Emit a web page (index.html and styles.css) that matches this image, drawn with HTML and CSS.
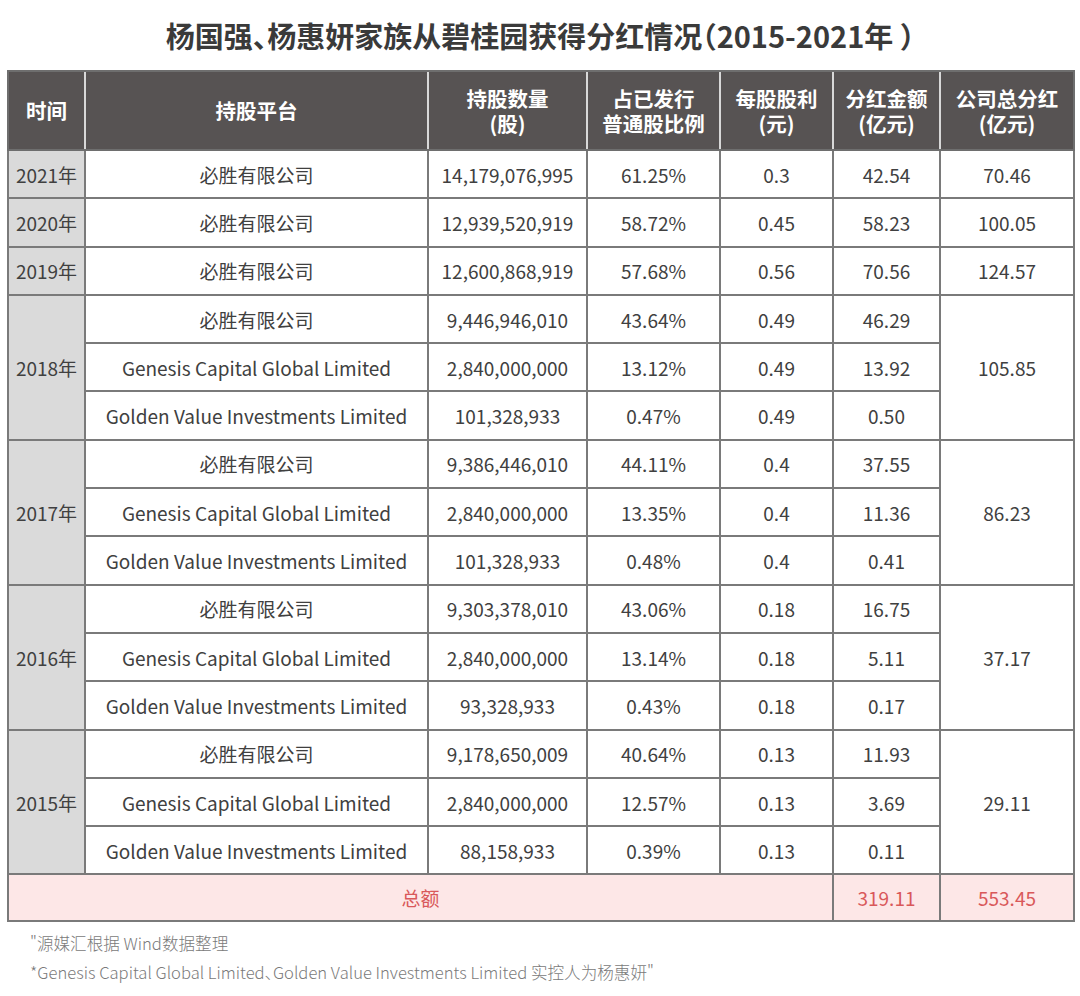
FILE: index.html
```html
<!DOCTYPE html>
<html lang="zh-CN">
<head>
<meta charset="utf-8">
<title>杨国强、杨惠妍家族从碧桂园获得分红情况</title>
<link rel="stylesheet" href="styles.css">
</head>
<body>
<h1 class="title">杨国强、杨惠妍家族从碧桂园获得分红情况（2015-2021年 ）</h1>
<table class="tbl">
  <colgroup>
    <col class="c1"><col class="c2"><col class="c3"><col class="c4"><col class="c5"><col class="c6"><col class="c7">
  </colgroup>
  <thead>
    <tr>
      <th>时间</th>
      <th>持股平台</th>
      <th><span class="hl">持股数量</span><span class="hl">(股)</span></th>
      <th><span class="hl">占已发行</span><span class="hl">普通股比例</span></th>
      <th><span class="hl">每股股利</span><span class="hl">(元)</span></th>
      <th><span class="hl">分红金额</span><span class="hl">(亿元)</span></th>
      <th><span class="hl">公司总分红</span><span class="hl">(亿元)</span></th>
    </tr>
  </thead>
  <tbody>
    <tr class="r"><td class="yr">2021年</td><td>必胜有限公司</td><td>14,179,076,995</td><td>61.25%</td><td>0.3</td><td>42.54</td><td>70.46</td></tr>
    <tr class="r"><td class="yr">2020年</td><td>必胜有限公司</td><td>12,939,520,919</td><td>58.72%</td><td>0.45</td><td>58.23</td><td>100.05</td></tr>
    <tr class="r"><td class="yr">2019年</td><td>必胜有限公司</td><td>12,600,868,919</td><td>57.68%</td><td>0.56</td><td>70.56</td><td>124.57</td></tr>

    <tr class="r"><td class="yr" rowspan="3">2018年</td><td>必胜有限公司</td><td>9,446,946,010</td><td>43.64%</td><td>0.49</td><td>46.29</td><td rowspan="3">105.85</td></tr>
    <tr class="r"><td>Genesis Capital Global Limited</td><td>2,840,000,000</td><td>13.12%</td><td>0.49</td><td>13.92</td></tr>
    <tr class="r"><td>Golden Value Investments Limited</td><td>101,328,933</td><td>0.47%</td><td>0.49</td><td>0.50</td></tr>

    <tr class="r"><td class="yr" rowspan="3">2017年</td><td>必胜有限公司</td><td>9,386,446,010</td><td>44.11%</td><td>0.4</td><td>37.55</td><td rowspan="3">86.23</td></tr>
    <tr class="r"><td>Genesis Capital Global Limited</td><td>2,840,000,000</td><td>13.35%</td><td>0.4</td><td>11.36</td></tr>
    <tr class="r"><td>Golden Value Investments Limited</td><td>101,328,933</td><td>0.48%</td><td>0.4</td><td>0.41</td></tr>

    <tr class="r"><td class="yr" rowspan="3">2016年</td><td>必胜有限公司</td><td>9,303,378,010</td><td>43.06%</td><td>0.18</td><td>16.75</td><td rowspan="3">37.17</td></tr>
    <tr class="r"><td>Genesis Capital Global Limited</td><td>2,840,000,000</td><td>13.14%</td><td>0.18</td><td>5.11</td></tr>
    <tr class="r"><td>Golden Value Investments Limited</td><td>93,328,933</td><td>0.43%</td><td>0.18</td><td>0.17</td></tr>

    <tr class="r"><td class="yr" rowspan="3">2015年</td><td>必胜有限公司</td><td>9,178,650,009</td><td>40.64%</td><td>0.13</td><td>11.93</td><td rowspan="3">29.11</td></tr>
    <tr class="r"><td>Genesis Capital Global Limited</td><td>2,840,000,000</td><td>12.57%</td><td>0.13</td><td>3.69</td></tr>
    <tr class="r"><td>Golden Value Investments Limited</td><td>88,158,933</td><td>0.39%</td><td>0.13</td><td>0.11</td></tr>

    <tr class="total"><td colspan="5">总额</td><td>319.11</td><td>553.45</td></tr>
  </tbody>
</table>
<div class="notes">
  <p>"源媒汇根据 Wind数据整理</p>
  <p>*Genesis Capital Global Limited、Golden Value Investments Limited 实控人为杨惠妍"</p>
</div>
</body>
</html>
```
FILE: styles.css
```css
html, body {
  margin: 0;
  padding: 0;
  background: #ffffff;
}
body {
  font-family: "Noto Sans CJK SC", "Noto Sans", sans-serif;
  color: #404040;
  width: 1080px;
}
.title {
  margin: 0;
  padding-top: 6px;
  height: 64px;
  line-height: 58px;
  font-size: 29px;
  font-weight: 700;
  color: #3a3a3a;
  text-align: center;
  font-feature-settings: "halt";
}
.tbl {
  margin-left: 7px;
  width: 1066px;
  border-collapse: collapse;
  table-layout: fixed;
  font-size: 19px;
}
.c1 { width: 77px; }
.c2 { width: 343px; }
.c3 { width: 159px; }
.c4 { width: 133px; }
.c5 { width: 113px; }
.c6 { width: 107px; }
.c7 { width: 134px; }
.tbl th {
  height: 77px;
  padding: 0;
  background: #575353;
  color: #ffffff;
  font-weight: 700;
  font-size: 20.5px;
  line-height: 25px;
  text-align: center;
  border-left: 2px solid #d8d8d8;
  border-bottom: 2px solid #6e6e6e;
  border-top: 2px solid #6e6e6e;
}
.tbl th .hl {
  display: block;
  height: 25px;
  line-height: 25px;
}
.tbl th:first-child { border-left: 2px solid #6e6e6e; }
.tbl th:last-child { border-right: 2px solid #6e6e6e; }
.tbl td {
  padding: 0;
  text-align: center;
  border: 2px solid #7a7a7a;
  color: #404040;
}
.tbl .r { height: 48.3px; }
.tbl .yr {
  background: #dadada;
}
.tbl .total td {
  height: 45px;
  background: #fde7e7;
  color: #d9585a;
}
.notes {
  margin: 7px 0 0 30px;
  font-size: 16.6px;
  font-weight: 300;
  color: #7a7a7a;
  line-height: 29px;
  font-feature-settings: "halt";
}
.notes p { margin: 0; }
```
